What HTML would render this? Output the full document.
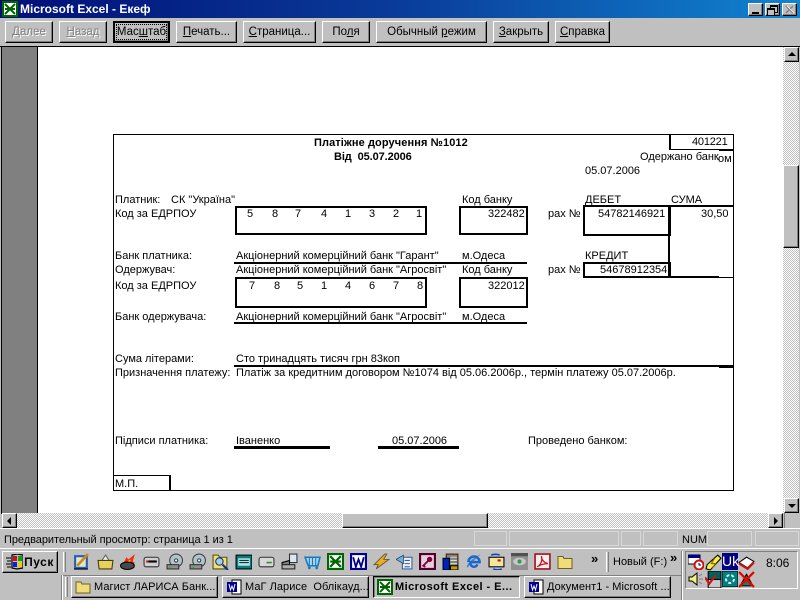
<!DOCTYPE html>
<html><head><meta charset="utf-8"><style>
html,body{margin:0;padding:0}
body{width:800px;height:600px;position:relative;overflow:hidden;background:#c0c0c0;font:11px "Liberation Sans",sans-serif;color:#000}
div,span,svg{position:absolute}
span{white-space:pre;line-height:12px}
.b{box-sizing:border-box;background:#c0c0c0;border:1px solid;border-color:#fff #000 #000 #fff;box-shadow:inset -1px -1px 0 #808080;text-align:center;line-height:21px;font-size:11.5px;white-space:pre}
.d{color:#808080;text-shadow:1px 1px 0 #fff}
u{text-underline-offset:1px}
.k{background:#000}
.t{font-size:11px;line-height:12px;margin-top:-1px}
.ck{background:conic-gradient(#fff 25%,#c0c0c0 0 50%,#fff 0 75%,#c0c0c0 0) 0 0/2px 2px}
.s{box-sizing:border-box;border:1px solid;border-color:#808080 #fff #fff #808080}
.task{box-sizing:border-box;height:22px;top:576px;width:147px;background:#c0c0c0;border:1px solid;border-color:#fff #000 #000 #fff;box-shadow:inset -1px -1px 0 #808080;font-size:11px;line-height:20px;white-space:pre}
.task span{top:4px;left:22px;letter-spacing:.05px}
.h{width:1px;border-left:1px solid #fff;border-right:1px solid #808080;box-sizing:content-box;background:#c0c0c0}
</style></head><body>

<!-- title bar -->
<div style="left:0;top:0;width:800px;height:18px;background:linear-gradient(90deg,#000f78 0%,#0a3c9a 50%,#1084d0 100%)"></div>
<svg style="left:2px;top:1px" width="16" height="16" viewBox="0 0 16 16"><rect width="16" height="16" fill="#006400"/><rect x="2" y="2" width="12" height="12" fill="#fff"/><path d="M3 3l10 10M3 13L13 3M3 8h10" stroke="#006400" stroke-width="2"/></svg>
<span style="left:20px;top:2px;color:#fff;font:bold 12px/14px 'Liberation Sans',sans-serif">Microsoft Excel - Екеф</span>
<div class="b" style="left:748px;top:3px;width:15px;height:13px"><div class="k" style="left:3px;top:8px;width:7px;height:2px"></div></div>
<div class="b" style="left:765px;top:3px;width:15px;height:13px"><div style="left:4px;top:1px;width:6px;height:5px;border:1px solid #000;border-top-width:2px"></div><div style="left:1px;top:4px;width:6px;height:5px;border:1px solid #000;border-top-width:2px;background:#c0c0c0"></div></div>
<div class="b" style="left:782px;top:3px;width:15px;height:13px"><svg style="left:2px;top:1px" width="10" height="9"><path d="M1 1l7 7M8 1L1 8" stroke="#808080" stroke-width="1.5"/><path d="M2 1l7 7" stroke="#fff" stroke-width=".7"/></svg></div>

<!-- toolbar -->
<div class="b d" style="left:5px;top:21px;width:48px;height:22px"><u>Д</u>алее</div>
<div class="b d" style="left:59px;top:21px;width:48px;height:22px"><u>Н</u>азад</div>
<div class="b" style="left:113px;top:21px;width:57px;height:22px;border:2px solid #000;line-height:19px"><div style="left:1px;top:1px;right:1px;bottom:1px;border:1px dotted #000"></div>Мас<u>ш</u>таб</div>
<div class="b" style="left:176px;top:21px;width:61px;height:22px"><u>П</u>ечать...</div>
<div class="b" style="left:243px;top:21px;width:73px;height:22px"><u>С</u>траница...</div>
<div class="b" style="left:322px;top:21px;width:48px;height:22px">По<u>л</u>я</div>
<div class="b" style="left:376px;top:21px;width:111px;height:22px">Обычный <u>р</u>ежим</div>
<div class="b" style="left:493px;top:21px;width:56px;height:22px"><u>З</u>акрыть</div>
<div class="b" style="left:555px;top:21px;width:55px;height:22px"><u>С</u>правка</div>

<!-- client -->
<div class="k" style="left:0;top:46px;width:800px;height:1px"></div>
<div class="k" style="left:1px;top:46px;width:1px;height:468px"></div>
<div style="left:2px;top:47px;width:35px;height:466px;background:#808080"></div>
<div class="k" style="left:37px;top:47px;width:1px;height:466px"></div>
<div style="left:38px;top:47px;width:745px;height:466px;background:#fff"></div>

<!-- vscroll -->
<div class="ck" style="left:783px;top:47px;width:16px;height:466px"></div>
<div class="b" style="left:784px;top:47px;width:15px;height:15px"><div style="left:3px;top:4px;width:0;height:0;border:4px solid transparent;border-top:0;border-bottom-color:#000"></div></div>
<div class="b" style="left:783px;top:165px;width:16px;height:83px"></div>
<div class="b" style="left:784px;top:498px;width:15px;height:15px"><div style="left:3px;top:5px;width:0;height:0;border:4px solid transparent;border-bottom:0;border-top-color:#000"></div></div>

<!-- hscroll -->
<div class="ck" style="left:2px;top:513px;width:781px;height:15px"></div>
<div class="b" style="left:2px;top:513px;width:15px;height:15px"><div style="left:4px;top:3px;width:0;height:0;border:4px solid transparent;border-left:0;border-right-color:#000"></div></div>
<div class="b" style="left:342px;top:513px;width:146px;height:15px"></div>
<div class="b" style="left:768px;top:513px;width:15px;height:15px"><div style="left:5px;top:3px;width:0;height:0;border:4px solid transparent;border-right:0;border-left-color:#000"></div></div>
<div style="left:784px;top:513px;width:15px;height:15px;background:#c0c0c0;border-left:1px solid #808080;box-sizing:border-box"></div>
<div style="left:0;top:528px;width:800px;height:1px;background:#fff"></div>

<!-- form lines -->
<div class="k" style="left:113px;top:134px;width:620px;height:1px"></div>
<div class="k" style="left:113px;top:134px;width:1px;height:357px"></div>
<div class="k" style="left:733px;top:134px;width:1px;height:357px"></div>
<div class="k" style="left:113px;top:490px;width:621px;height:1px"></div>
<div class="k" style="left:669px;top:134px;width:2px;height:16px"></div>
<div class="k" style="left:669px;top:149px;width:65px;height:1px"></div>
<div class="k" style="left:719px;top:149px;width:15px;height:2px"></div>

<div style="left:235px;top:206px;width:188px;height:25px;border:2px solid #000"></div>
<div style="left:459px;top:206px;width:65px;height:25px;border:2px solid #000"></div>
<div style="left:583px;top:205px;width:84px;height:27px;border:2px solid #000"></div>
<div class="k" style="left:669px;top:205px;width:65px;height:2px"></div>
<div class="k" style="left:668px;top:206px;width:2px;height:71px"></div>
<div style="left:583px;top:262px;width:84px;height:12px;border:2px solid #000"></div>
<div class="k" style="left:669px;top:276px;width:50px;height:2px"></div>
<div class="k" style="left:719px;top:277px;width:15px;height:1px"></div>

<div class="k" style="left:234px;top:262px;width:293px;height:2px"></div>
<div style="left:235px;top:277px;width:188px;height:27px;border:2px solid #000"></div>
<div style="left:459px;top:277px;width:65px;height:27px;border:2px solid #000"></div>
<div class="k" style="left:234px;top:322px;width:293px;height:2px"></div>
<div class="k" style="left:234px;top:365px;width:499px;height:2px"></div>
<div class="k" style="left:719px;top:366px;width:15px;height:2px"></div>
<div class="k" style="left:234px;top:446px;width:96px;height:3px"></div>
<div class="k" style="left:378px;top:446px;width:81px;height:3px"></div>
<div class="k" style="left:113px;top:475px;width:57px;height:1px"></div>
<div class="k" style="left:169px;top:475px;width:2px;height:15px"></div>

<!-- form text -->
<span class="t" style="left:314px;top:138px;font-weight:bold;letter-spacing:.1px">Платіжне доручення №1012</span>
<span class="t" style="left:334px;top:152px;font-weight:bold;letter-spacing:-.1px">Від  05.07.2006</span>
<span class="t" style="left:692px;top:137px;letter-spacing:-.2px">401221</span>
<span class="t" style="left:640px;top:152px">Одержано банк</span><span class="t" style="left:718px;top:154px">ом</span>
<span class="t" style="left:585px;top:166px">05.07.2006</span>

<span class="t" style="left:115px;top:195px">Платник:</span>
<span class="t" style="left:171px;top:195px">СК "Україна"</span>
<span class="t" style="left:115px;top:209px">Код за ЕДРПОУ</span>
<span class="t" style="left:247px;top:209px">5</span><span class="t" style="left:272px;top:209px">8</span><span class="t" style="left:295px;top:209px">7</span><span class="t" style="left:321px;top:209px">4</span><span class="t" style="left:345px;top:209px">1</span><span class="t" style="left:369px;top:209px">3</span><span class="t" style="left:393px;top:209px">2</span><span class="t" style="left:416px;top:209px">1</span>
<span class="t" style="left:462px;top:195px">Код банку</span>
<span class="t" style="left:488px;top:209px">322482</span>
<span class="t" style="left:548px;top:209px">рах №</span>
<span class="t" style="left:598px;top:209px">54782146921</span>
<span class="t" style="left:585px;top:195px">ДЕБЕТ</span>
<span class="t" style="left:671px;top:195px">СУМА</span>
<span class="t" style="left:701px;top:209px">30,50</span>

<span class="t" style="left:115px;top:251px">Банк платника:</span>
<span class="t" style="left:236px;top:251px">Акціонерний комерційний банк "Гарант"</span>
<span class="t" style="left:462px;top:251px">м.Одеса</span>
<span class="t" style="left:585px;top:251px">КРЕДИТ</span>
<span class="t" style="left:115px;top:265px">Одержувач:</span>
<span class="t" style="left:236px;top:265px">Акціонерний комерційний банк "Агросвіт"</span>
<span class="t" style="left:462px;top:265px">Код банку</span>
<span class="t" style="left:548px;top:265px">рах №</span>
<span class="t" style="left:600px;top:265px">54678912354</span>
<span class="t" style="left:115px;top:281px">Код за ЕДРПОУ</span>
<span class="t" style="left:249px;top:281px">7</span><span class="t" style="left:274px;top:281px">8</span><span class="t" style="left:297px;top:281px">5</span><span class="t" style="left:321px;top:281px">1</span><span class="t" style="left:345px;top:281px">4</span><span class="t" style="left:369px;top:281px">6</span><span class="t" style="left:393px;top:281px">7</span><span class="t" style="left:417px;top:281px">8</span>
<span class="t" style="left:488px;top:281px">322012</span>
<span class="t" style="left:115px;top:312px">Банк одержувача:</span>
<span class="t" style="left:236px;top:312px">Акціонерний комерційний банк "Агросвіт"</span>
<span class="t" style="left:462px;top:312px">м.Одеса</span>

<span class="t" style="left:115px;top:354px">Сума літерами:</span>
<span class="t" style="left:236px;top:354px">Сто тринадцять тисяч грн 83коп</span>
<span class="t" style="left:115px;top:368px">Призначення платежу:</span>
<span class="t" style="left:236px;top:368px">Платіж за кредитним договором №1074 від 05.06.2006р., термін платежу 05.07.2006р.</span>
<span class="t" style="left:115px;top:436px">Підписи платника:</span>
<span class="t" style="left:236px;top:436px">Іваненко</span>
<span class="t" style="left:392px;top:436px">05.07.2006</span>
<span class="t" style="left:528px;top:436px">Проведено банком:</span>
<span class="t" style="left:115px;top:479px">М.П.</span>

<!-- status bar -->
<span style="left:4px;top:534px;font-size:11px;letter-spacing:-.05px">Предварительный просмотр: страница 1 из 1</span>
<div class="s" style="left:474px;top:531px;width:33px;height:15px;border-color:#d8d8d8"></div>
<div class="s" style="left:509px;top:531px;width:110px;height:15px;border-color:#d8d8d8"></div>
<div class="s" style="left:621px;top:531px;width:20px;height:15px;border-color:#d8d8d8"></div>
<div class="s" style="left:643px;top:531px;width:35px;height:15px;border-color:#d8d8d8"></div>
<span style="left:682px;top:534px;font-size:11px">NUM</span>
<div class="s" style="left:707px;top:531px;width:45px;height:15px;border-color:#d8d8d8"></div>
<div class="s" style="left:755px;top:531px;width:44px;height:15px;border-color:#d8d8d8"></div>

<!-- taskbar -->
<div style="left:0;top:548px;width:800px;height:1px;background:#fff"></div>
<div style="left:0;top:549px;width:800px;height:51px;background:#c0c0c0"></div>
<div class="b" style="left:2px;top:551px;width:56px;height:22px;font:bold 12px/20px 'Liberation Sans',sans-serif;letter-spacing:.5px;padding-left:18px;border-width:1px">Пуск</div>
<svg style="left:6px;top:554px" width="17" height="16" viewBox="0 0 17 16"><path d="M7 2h4v5H7z" fill="#d01010"/><path d="M12 2h4v5h-4z" fill="#10a010"/><path d="M7 8h4v5H7z" fill="#1020d0"/><path d="M12 8h4v5h-4z" fill="#e8d000"/><path d="M6 1l5-1 6 1v13l-6 1-5-1z" fill="none" stroke="#000" stroke-width="1.2"/><path d="M0 4h5M1 7h4M0 10h5M1 13h4" stroke="#000"/></svg>

<div class="h" style="left:63px;top:552px;height:20px"></div>
<div style="left:61px;top:575px;width:620px;height:1px;background:#808080"></div>
<div class="h" style="left:65px;top:577px;height:20px"></div>
<div style="left:61px;top:575px;width:1px;height:25px;background:#808080"></div>
<div style="left:62px;top:575px;width:1px;height:25px;background:#fff"></div>

<!-- quick launch icons -->
<svg style="left:73px;top:553px" width="17" height="17" viewBox="0 0 16 16"><rect x="1" y="2" width="13" height="13" fill="#2a5fb0"/><rect x="3" y="4" width="9" height="9" fill="#e8e4c8"/><path d="M4 12L14 1" stroke="#c09020" stroke-width="2.500"/><path d="M1 15h13" stroke="#102040" stroke-width="1.500"/></svg>
<svg style="left:97px;top:553px" width="17" height="17" viewBox="0 0 16 16"><path d="M4 8l4-6 4 6z" fill="#f0f0f0" stroke="#606060"/><path d="M1 7h14l-1 8H2z" fill="#e8d060" stroke="#404000"/></svg>
<svg style="left:120px;top:553px" width="17" height="17" viewBox="0 0 16 16"><path d="M3 10l3-6 2 2 6-5-2 7 2 1-4 3z" fill="#f03010"/><path d="M6 9l4-3-1 4z" fill="#ffe020"/><ellipse cx="7" cy="12" rx="6.500" ry="3.500" fill="#484848" stroke="#000"/></svg>
<svg style="left:143px;top:554px" width="17" height="15" viewBox="0 0 16 14"><rect x="1" y="3" width="14" height="9" rx="2" fill="#d0d0d0" stroke="#303030"/><path d="M5 7h8" stroke="#000" stroke-width="2"/><rect x="3" y="6" width="2" height="2" fill="#d01010"/></svg>
<svg style="left:166px;top:553px" width="17" height="17" viewBox="0 0 16 16"><circle cx="9.500" cy="7" r="6" fill="#b0c4cc" stroke="#404040"/><circle cx="9.500" cy="7" r="1.500" fill="#fff" stroke="#404040"/><rect x="1" y="11" width="11" height="4" fill="#909090" stroke="#303030"/><rect x="3" y="13" width="2" height="1" fill="#10c010"/></svg>
<svg style="left:189px;top:553px" width="17" height="17" viewBox="0 0 16 16"><circle cx="9.500" cy="7" r="6" fill="#b0c4cc" stroke="#404040"/><circle cx="9.500" cy="7" r="1.500" fill="#fff" stroke="#404040"/><rect x="1" y="11" width="11" height="4" fill="#909090" stroke="#303030"/><rect x="3" y="13" width="2" height="1" fill="#10c010"/></svg>
<svg style="left:212px;top:553px" width="17" height="17" viewBox="0 0 16 16"><path d="M1 2h5l1 2h7v11H1z" fill="#f0e080" stroke="#505000"/><circle cx="7" cy="8" r="3.500" fill="#a0d0f0" stroke="#203060"/><path d="M10 11l5 5" stroke="#1030a0" stroke-width="2"/></svg>
<svg style="left:235px;top:553px" width="17" height="17" viewBox="0 0 16 16"><rect x="1" y="2" width="15" height="13" fill="#008080" stroke="#000"/><rect x="3" y="5" width="11" height="7" fill="#c0e0e0"/><path d="M4 7h9M4 9h9" stroke="#004040"/></svg>
<svg style="left:258px;top:554px" width="17" height="15" viewBox="0 0 16 14"><rect x="1" y="3" width="14" height="9" rx="2" fill="#d8d8d8" stroke="#303030"/><path d="M8 8h5" stroke="#309030" stroke-width="1.500"/></svg>
<svg style="left:281px;top:553px" width="17" height="17" viewBox="0 0 16 16"><rect x="8" y="1" width="7" height="8" fill="#d8e8f0" stroke="#303030"/><path d="M1 9l7-2v5H1z" fill="#808080" stroke="#000"/><rect x="1" y="11" width="12" height="4" fill="#b0b0b0" stroke="#202020"/></svg>
<svg style="left:304px;top:553px" width="17" height="17" viewBox="0 0 16 16"><path d="M1 4h14l-2 8H4z" fill="#a8d8f0" stroke="#1878c0" stroke-width="1.500"/><path d="M5 4v8M8 4v8M11 4v8" stroke="#1878c0"/><circle cx="5" cy="14" r="1.300" fill="#1878c0"/><circle cx="12" cy="14" r="1.300" fill="#1878c0"/></svg>
<svg style="left:327px;top:553px" width="17" height="17" viewBox="0 0 16 16"><rect width="16" height="16" fill="#006400"/><rect x="2" y="2" width="12" height="12" fill="#fff"/><path d="M3 3l10 10M3 13L13 3M3 8h10" stroke="#006400" stroke-width="2"/></svg>
<svg style="left:350px;top:553px" width="17" height="17" viewBox="0 0 16 16"><rect width="16" height="16" fill="#000090"/><rect x="2" y="2" width="12" height="12" fill="#fff"/><path d="M3 4l2.500 9L8 6l2.500 7L13 4" fill="none" stroke="#000090" stroke-width="1.700"/></svg>
<svg style="left:373px;top:553px" width="17" height="17" viewBox="0 0 16 16"><path d="M11 1L1 11l4 0-2 4L15 6h-5l3-5z" fill="#e8b020" stroke="#605030" stroke-width=".8"/></svg>
<svg style="left:396px;top:553px" width="17" height="17" viewBox="0 0 16 16"><rect x="6" y="4" width="9" height="11" fill="#f0f0f8" stroke="#3060a0"/><path d="M8 7h5M8 10h5M8 13h5" stroke="#3060a0"/><path d="M0 6l7-4v8z" fill="#70b0e0" stroke="#204060" stroke-width=".7"/></svg>
<svg style="left:419px;top:553px" width="17" height="17" viewBox="0 0 16 16"><rect width="16" height="16" fill="#500030"/><rect x="2" y="2" width="12" height="12" fill="#e8d0d8"/><circle cx="10" cy="6" r="2.500" fill="#800040"/><path d="M9 7l-5 5 2 1" fill="none" stroke="#800040" stroke-width="1.700"/></svg>
<svg style="left:442px;top:553px" width="17" height="17" viewBox="0 0 16 16"><rect x="4" y="1" width="11" height="12" fill="#808080" stroke="#402000"/><rect x="1" y="5" width="6" height="11" fill="#0020c0" stroke="#000"/><path d="M8 4h6M8 7h6M8 10h6" stroke="#e0e0c0"/><rect x="8" y="12" width="7" height="4" fill="#c0a000" stroke="#000"/></svg>
<svg style="left:465px;top:552px" width="18" height="18" viewBox="0 0 16 16"><path d="M3 9a5 5 0 0 1 10 0H5a3 3 0 0 0 6 2" fill="none" stroke="#1868d0" stroke-width="2.200"/><path d="M2 14c-2-2 5-9 12-12-4 3-9 9-12 12z" fill="#1868d0" opacity=".7"/></svg>
<svg style="left:488px;top:553px" width="17" height="17" viewBox="0 0 16 16"><rect x="1" y="4" width="14" height="9" fill="#f0e8a0" stroke="#000"/><rect x="9" y="6" width="3" height="2" fill="#d01010"/><path d="M3 2a6 3 0 0 1 8 0M13 15a6 3 0 0 1-8 0" fill="none" stroke="#1040d0" stroke-width="1.500"/></svg>
<svg style="left:511px;top:553px" width="17" height="17" viewBox="0 0 16 16"><rect width="16" height="16" fill="#909090"/><ellipse cx="8" cy="8" rx="6" ry="3.500" fill="#c8c8c8"/><circle cx="8" cy="8" r="2" fill="#30a050"/><rect width="16" height="3" fill="#505050"/></svg>
<svg style="left:534px;top:553px" width="17" height="17" viewBox="0 0 16 16"><rect x="1" y="1" width="14" height="14" fill="#f0f0f0" stroke="#a01020" stroke-width="1.500"/><path d="M3 13c4-2 5-7 4-10 0 4 3 6 6 7-4 0-7 1-10 3z" fill="none" stroke="#d01020" stroke-width="1.200"/></svg>
<svg style="left:557px;top:553px" width="16" height="17" viewBox="0 0 16 16"><path d="M1 3h5l1 2h8v10H1z" fill="#f0dc78" stroke="#6a6020"/></svg>
<span style="left:591px;top:553px;font:bold 13px/12px 'Liberation Sans',sans-serif">»</span>

<div class="h" style="left:606px;top:552px;height:20px"></div>
<span style="left:613px;top:556px;font-size:11px">Новый (F:)</span>
<span style="left:670px;top:552px;font:bold 13px/12px 'Liberation Sans',sans-serif">»</span>

<!-- task buttons -->
<div class="task" style="left:71px"><span>Магист ЛАРИСА Банк...</span></div>
<svg style="left:75px;top:579px" width="16" height="15" viewBox="0 0 16 15"><path d="M1 3h5l1 2h8v9H1z" fill="#f0dc78" stroke="#6a6020"/></svg>
<div class="task" style="left:222px"><span>МаГ Ларисе  Облікауд...</span></div>
<svg style="left:226px;top:579px" width="16" height="16" viewBox="0 0 16 16"><rect x="6" y="1" width="9" height="14" fill="#fff" stroke="#000"/><rect x="1" y="3" width="10" height="10" fill="#000090"/><path d="M3 5l1.500 6L6 7l1.500 4L9 5" fill="none" stroke="#fff"/></svg>
<div class="task ck" style="left:373px;border-color:#000 #fff #fff #000;box-shadow:inset 1px 1px 0 #808080"></div>
<span style="left:395px;top:581px;font:bold 11px/12px 'Liberation Sans',sans-serif;letter-spacing:.45px">Microsoft Excel - Е...</span>
<svg style="left:377px;top:579px" width="16" height="16" viewBox="0 0 16 16"><rect width="16" height="16" fill="#006400"/><rect x="2" y="2" width="12" height="12" fill="#fff"/><path d="M3 3l10 10M3 13L13 3M3 8h10" stroke="#006400" stroke-width="2"/></svg>
<div class="task" style="left:524px"><span>Документ1 - Microsoft ...</span></div>
<svg style="left:528px;top:579px" width="16" height="16" viewBox="0 0 16 16"><rect x="6" y="1" width="9" height="14" fill="#fff" stroke="#000"/><rect x="1" y="3" width="10" height="10" fill="#000090"/><path d="M3 5l1.500 6L6 7l1.500 4L9 5" fill="none" stroke="#fff"/></svg>

<!-- tray -->
<div style="left:681px;top:551px;width:1px;height:49px;background:#808080"></div>
<div style="left:682px;top:551px;width:1px;height:49px;background:#fff"></div>
<div class="s" style="left:685px;top:551px;width:113px;height:38px"></div>
<svg style="left:688px;top:554px" width="16" height="16" viewBox="0 0 16 16"><rect x="0" y="1" width="12" height="9" fill="#fff" stroke="#000"/><rect x="0" y="1" width="12" height="3" fill="#000090"/><circle cx="11" cy="11" r="4.500" fill="#fff" stroke="#d01010" stroke-width="2"/><path d="M11 9v2h2" stroke="#000" fill="none"/></svg>
<svg style="left:705px;top:554px" width="17" height="17" viewBox="0 0 16 16"><path d="M12 1l3 3-10 11-4-1 1-4z" fill="#f8f040" stroke="#000"/><path d="M9 4l-3 5h4l-3 4" fill="none" stroke="#806000"/></svg>
<div style="left:722px;top:553px;width:16px;height:17px;background:#000080;color:#fff;font:14px/17px 'Liberation Sans',sans-serif;text-align:center">Uk</div>
<svg style="left:738px;top:555px" width="17" height="15" viewBox="0 0 16 14"><path d="M1 7l7-5 7 4-6 6z" fill="#fff" stroke="#000"/><path d="M1 8l8 5 6-6" fill="none" stroke="#d01010" stroke-width="2"/></svg>
<svg style="left:688px;top:571px" width="16" height="16" viewBox="0 0 16 16"><path d="M1 6h3l5-4v12l-5-4H1z" fill="#f0f080" stroke="#000"/><path d="M11 5l3-2M11 8h4M11 11l3 2" stroke="#808080"/></svg>
<svg style="left:705px;top:571px" width="17" height="17" viewBox="0 0 16 16"><rect x="3" y="0" width="12" height="8" fill="#006060" stroke="#000"/><rect x="3" y="8" width="12" height="8" fill="#c8c8c8" stroke="#000"/><path d="M0 6l4 6 6-8" fill="none" stroke="#d01010" stroke-width="2"/></svg>
<svg style="left:722px;top:571px" width="16" height="16" viewBox="0 0 16 16"><rect width="16" height="16" fill="#008080" stroke="#000"/><circle cx="8" cy="8" r="4" fill="none" stroke="#e0f0f0" stroke-width="2" stroke-dasharray="3 2"/></svg>
<svg style="left:738px;top:571px" width="17" height="17" viewBox="0 0 16 16"><path d="M2 14L8 3l6 11z" fill="#108060" stroke="#000"/><path d="M1 1l14 14M15 1L1 15" stroke="#f00000" stroke-width="2.200"/></svg>
<span style="left:766px;top:557px;font-size:12px">8:06</span>
</body></html>
